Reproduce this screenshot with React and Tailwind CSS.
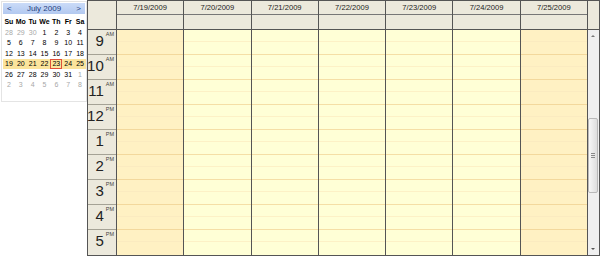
import React from "react";

const weeks = [
  [[28, 1], [29, 1], [30, 1], [1], [2], [3], [4]],
  [[5], [6], [7], [8], [9], [10], [11]],
  [[12], [13], [14], [15], [16], [17], [18]],
  [[19], [20], [21], [22], [23], [24], [25]],
  [[26], [27], [28], [29], [30], [31], [1, 1]],
  [[2, 1], [3, 1], [4, 1], [5, 1], [6, 1], [7, 1], [8, 1]],
];

const days = [
  { d: "7/19/2009", we: true },
  { d: "7/20/2009" },
  { d: "7/21/2009" },
  { d: "7/22/2009" },
  { d: "7/23/2009" },
  { d: "7/24/2009" },
  { d: "7/25/2009", we: true },
];

const hours = [
  ["9", "AM"],
  ["10", "AM"],
  ["11", "AM"],
  ["12", "PM"],
  ["1", "PM"],
  ["2", "PM"],
  ["3", "PM"],
  ["4", "PM"],
  ["5", "PM"],
];

function MiniCalendar() {
  return (
    <div className="w-[86px] h-[101px] ml-[1px] mt-[1px] border border-[#e4e4e4] flex flex-col">
      <div className="mx-[1px] mt-[1px] h-[11px] bg-[linear-gradient(#cadbf8,#b3c9f0)] flex items-center justify-between px-[4px] text-[#1f3f80] text-[8px] leading-none">
        <span>&lt;</span>
        <span>July 2009</span>
        <span>&gt;</span>
      </div>
      <div className="w-[83px] ml-[1px] mt-[2px] grid grid-cols-7 h-[11px] items-center text-[7px] font-bold text-black leading-none">
        {["Su", "Mo", "Tu", "We", "Th", "Fr", "Sa"].map((n) => (
          <div key={n} className="text-center">
            {n}
          </div>
        ))}
      </div>
      {weeks.map((w, i) => (
        <div
          key={i}
          className={
            "w-[83px] ml-[1px] grid grid-cols-7 h-[10.5px] items-center text-[7px] leading-none " +
            (i === 3 ? "bg-[#fbe49c]" : "")
          }
        >
          {w.map(([n, o], j) => (
            <div
              key={j}
              className={
                "h-full flex items-center justify-center " +
                (o ? "text-[#a8a8a8] " : "text-black ") +
                (i === 3 && j === 4 ? "border border-[#e0503a]" : "")
              }
            >
              {n}
            </div>
          ))}
        </div>
      ))}
    </div>
  );
}

function Scrollbar() {
  return (
    <div className="w-[11px] bg-[#efefef] flex flex-col items-center">
      <div className="h-[12px] w-full flex items-center justify-center">
        <div className="w-0 h-0 border-l-[2px] border-r-[2px] border-b-[2px] border-l-transparent border-r-transparent border-b-[#777]" />
      </div>
      <div className="h-[76px]" />
      <div className="h-[75px] w-[10px] rounded-[2px] border border-[#b9b9b9] bg-[linear-gradient(90deg,#f7f7f7,#dedede)] flex flex-col items-center justify-center gap-[1px]">
        <div className="w-[4px] h-px bg-[#8a8a8a]" />
        <div className="w-[4px] h-px bg-[#8a8a8a]" />
        <div className="w-[4px] h-px bg-[#8a8a8a]" />
      </div>
      <div className="flex-1" />
      <div className="h-[12px] w-full flex items-center justify-center">
        <div className="w-0 h-0 border-l-[2px] border-r-[2px] border-t-[2px] border-l-transparent border-r-transparent border-t-[#555]" />
      </div>
    </div>
  );
}

export default function App() {
  return (
    <div className="w-[600px] h-[259px] bg-white flex font-['Liberation_Sans',Arial,sans-serif]">
      <MiniCalendar />
      <div className="w-[513px] h-[256px] border border-[#555] flex flex-col">
        <div className="flex h-[29px] bg-[#ece9dc] border-b border-[#555]">
          <div className="w-[29px] border-r border-[#555]" />
          {days.map((d) => (
            <div key={d.d} className="flex-1 border-r border-[#555] flex flex-col">
              <div className="h-[14px] border-b border-[#777] flex items-center justify-center text-[7.6px] text-[#222]">
                {d.d}
              </div>
              <div className="flex-1" />
            </div>
          ))}
          <div className="w-[11px]" />
        </div>
        <div className="flex flex-1">
          <div className="w-[29px] border-r border-[#555] bg-[#ece9dc] flex flex-col">
            {hours.map(([h, ap], i) => (
              <div
                key={i}
                className={
                  "h-[25px] flex justify-end items-start pr-[2px] text-[#222] " +
                  (i < hours.length - 1 ? "border-b border-[#a5a295]" : "")
                }
              >
                <span className="text-[15px] leading-none mt-[3px]">{h}</span>
                <span className="text-[5.5px] leading-none mt-[2px] ml-[2px] text-[#444]">{ap}</span>
              </div>
            ))}
          </div>
          {days.map((d) => (
            <div
              key={d.d}
              className={
                "flex-1 border-r border-[#555] flex flex-col " +
                (d.we ? "bg-[#fff1c3]" : "bg-[#ffffd6]")
              }
            >
              {hours.map((_, i) => (
                <div
                  key={i}
                  className={
                    "h-[25px] " +
                    (i < hours.length - 1
                      ? d.we
                        ? "border-b border-[#f3d89c]"
                        : "border-b border-[#f5dfa6]"
                      : "")
                  }
                >
                  <div className={"h-[12px] border-b " + (d.we ? "border-[#fbebc0]" : "border-[#fdf1c6]")} />
                </div>
              ))}
            </div>
          ))}
          <Scrollbar />
        </div>
      </div>
    </div>
  );
}
